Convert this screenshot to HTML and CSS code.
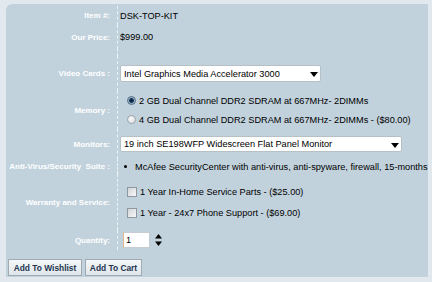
FILE: index.html
```html
<!DOCTYPE html>
<html>
<head>
<meta charset="utf-8">
<link rel="stylesheet" href="styles.css">
</head>
<body>
<div class="panel">
  <div class="form">
    <div class="lbl r1">Item #:</div>
    <div class="val r1"><span class="txt">DSK-TOP-KIT</span></div>

    <div class="lbl r2">Our Price:</div>
    <div class="val r2"><span class="txt">$999.00</span></div>

    <div class="lbl sp"></div>
    <div class="val sp"></div>

    <div class="lbl r3">Video Cards :</div>
    <div class="val r3">
      <div class="select sel-video">
        <span>Intel Graphics Media Accelerator 3000</span>
        <svg class="arrow" width="8" height="5" viewBox="0 0 8 5"><path d="M0 0H8L4 5Z" fill="#000"/></svg>
      </div>
    </div>

    <div class="lbl r4">Memory :</div>
    <div class="val r4 stack">
      <div class="opt"><span class="radio on"></span><span>2 GB Dual Channel DDR2 SDRAM at 667MHz- 2DIMMs</span></div>
      <div class="opt"><span class="radio"></span><span>4 GB Dual Channel DDR2 SDRAM at 667MHz- 2DIMMs - ($80.00)</span></div>
    </div>

    <div class="lbl r5">Monitors:</div>
    <div class="val r5">
      <div class="select sel-mon">
        <span>19 inch SE198WFP Widescreen Flat Panel Monitor</span>
        <svg class="arrow" width="8" height="5" viewBox="0 0 8 5"><path d="M0 0H8L4 5Z" fill="#000"/></svg>
      </div>
    </div>

    <div class="lbl r6">Anti-Virus/Security&nbsp; Suite :</div>
    <div class="val r6"><div class="opt bul"><span class="dot"></span><span class="nowrap">McAfee SecurityCenter with anti-virus, anti-spyware, firewall, 15-months</span></div></div>

    <div class="lbl r7">Warranty and Service:</div>
    <div class="val r7 stack">
      <div class="opt chk"><span class="check"></span><span>1 Year In-Home Service Parts - ($25.00)</span></div>
      <div class="opt chk"><span class="check"></span><span>1 Year - 24x7 Phone Support - ($69.00)</span></div>
    </div>

    <div class="lbl r8">Quantity:</div>
    <div class="val r8">
      <div class="qty">1</div>
      <svg class="spin" width="7" height="12" viewBox="0 0 7 12"><path d="M3.5 0L7 4.5H0Z M0 7.5H7L3.5 12Z" fill="#000"/></svg>
    </div>
  </div>
  <div class="buttons">
    <button class="btn btn-wish">Add To Wishlist</button>
    <button class="btn btn-cart">Add To Cart</button>
  </div>
</div>
</body>
</html>
```
FILE: styles.css
```css
html, body {
  margin: 0;
  padding: 0;
}
body {
  width: 432px;
  height: 282px;
  overflow: hidden;
  background: #e1e9ef;
  font-family: "Liberation Sans", Arial, sans-serif;
}
.panel {
  margin: 4px 4px 0 6px;
  width: 422px;
  height: 273px;
  background: #c2d2dd;
  border-top-left-radius: 6px;
  padding-top: 2px;
  box-sizing: border-box;
}
.form {
  display: grid;
  grid-template-columns: 111px 1fr;
  grid-template-rows: 19px 24px 7px 35px 38px 30px 15px 56px 20px;
}
.lbl {
  color: #fff;
  font-weight: bold;
  font-size: 8px;
  text-align: right;
  padding-right: 7px;
  display: flex;
  align-items: center;
  justify-content: flex-end;
  white-space: nowrap;
}
.val {
  border-left: 1px dashed #eef3f6;
  display: flex;
  align-items: center;
  font-size: 9.2px;
  color: #000;
  min-width: 0;
}
.stack {
  flex-direction: column;
  align-items: stretch;
  justify-content: center;
}
.txt {
  padding-left: 2px;
}
.select {
  margin-left: 2px;
  height: 17px;
  box-sizing: border-box;
  background: #fff;
  border: 1px solid #b5c0c7;
  border-radius: 2px;
  display: flex;
  align-items: center;
  justify-content: space-between;
  padding: 0 2px 0 3px;
}
.sel-video { width: 201px; }
.sel-mon { width: 282px; height: 16px; }
.arrow { margin-top: 2px; }
.opt {
  display: flex;
  align-items: center;
  height: 19px;
  white-space: nowrap;
  padding-left: 9px;
}
.radio {
  width: 9px;
  height: 9px;
  border-radius: 50%;
  box-sizing: border-box;
  border: 1px solid #9aa4aa;
  background: radial-gradient(circle at 40% 35%, #fafafa, #d6d9db);
  margin-right: 3px;
  flex: none;
}
.radio.on {
  border-color: #4f6d85;
  background: radial-gradient(circle, #0e2a4a 0 2px, #7d9ab2 2.5px, #c9d6df 4px);
}
.bul { padding-left: 6px; }
.dot {
  width: 3px;
  height: 3px;
  border-radius: 50%;
  background: #000;
  margin-right: 8px;
  flex: none;
}
.chk { height: 21px; }
.check {
  width: 10px;
  height: 10px;
  box-sizing: border-box;
  border: 1px solid #8e989e;
  background: linear-gradient(135deg, #d2d5d7, #f7f7f7);
  margin-right: 3px;
  flex: none;
}
.qty {
  margin-left: 5px;
  width: 27px;
  height: 16px;
  box-sizing: border-box;
  background: #fff;
  border: 1px solid #c6cdd2;
  border-left-color: #e2b58a;
  padding-left: 2px;
  line-height: 14px;
}
.spin {
  margin-left: 5px;
}
.buttons {
  display: flex;
  gap: 3px;
  padding-left: 2px;
  margin-top: 9px;
}
.btn {
  height: 17px;
  padding: 0;
  font-family: "Liberation Sans", Arial, sans-serif;
  font-weight: bold;
  font-size: 8.4px;
  color: #233550;
  background: linear-gradient(#f5f7f8, #dfe6eb);
  border: 1px solid #a0aab1;
  border-radius: 0;
  margin: 0;
  text-align: center;
}
.btn-wish { width: 74px; }
.btn-cart { width: 57px; }
```
